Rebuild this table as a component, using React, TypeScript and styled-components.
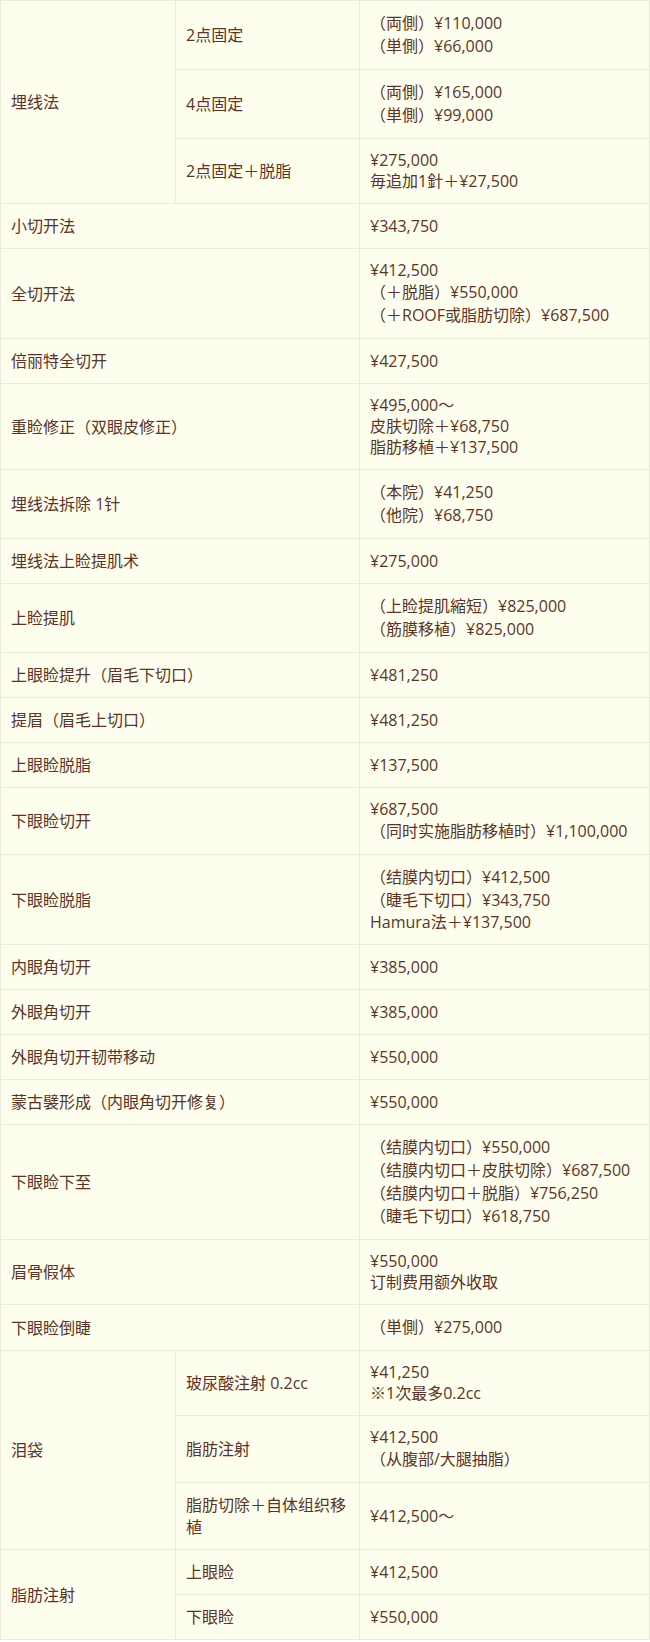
import { Fragment } from "react";
import styled, { createGlobalStyle } from "styled-components";

type Sub = {
  label: string;
  lines: string[];
};

type Item = {
  name: string;
  lines?: string[];
  subs?: Sub[];
};

const items: Item[] = [
  {
    name: "埋线法",
    subs: [
      { label: "2点固定", lines: ["（両側）¥110,000", "（単側）¥66,000"] },
      { label: "4点固定", lines: ["（両側）¥165,000", "（単側）¥99,000"] },
      { label: "2点固定＋脱脂", lines: ["¥275,000", "毎追加1針＋¥27,500"] },
    ],
  },
  { name: "小切开法", lines: ["¥343,750"] },
  {
    name: "全切开法",
    lines: ["¥412,500", "（＋脱脂）¥550,000", "（＋ROOF或脂肪切除）¥687,500"],
  },
  { name: "倍丽特全切开", lines: ["¥427,500"] },
  {
    name: "重睑修正（双眼皮修正）",
    lines: ["¥495,000～", "皮肤切除＋¥68,750", "脂肪移植＋¥137,500"],
  },
  { name: "埋线法拆除 1针", lines: ["（本院）¥41,250", "（他院）¥68,750"] },
  { name: "埋线法上睑提肌术", lines: ["¥275,000"] },
  {
    name: "上睑提肌",
    lines: ["（上睑提肌縮短）¥825,000", "（筋膜移植）¥825,000"],
  },
  { name: "上眼睑提升（眉毛下切口）", lines: ["¥481,250"] },
  { name: "提眉（眉毛上切口）", lines: ["¥481,250"] },
  { name: "上眼睑脱脂", lines: ["¥137,500"] },
  {
    name: "下眼睑切开",
    lines: ["¥687,500", "（同时实施脂肪移植时）¥1,100,000"],
  },
  {
    name: "下眼睑脱脂",
    lines: [
      "（结膜内切口）¥412,500",
      "（睫毛下切口）¥343,750",
      "Hamura法＋¥137,500",
    ],
  },
  { name: "内眼角切开", lines: ["¥385,000"] },
  { name: "外眼角切开", lines: ["¥385,000"] },
  { name: "外眼角切开韧带移动", lines: ["¥550,000"] },
  { name: "蒙古襞形成（内眼角切开修复）", lines: ["¥550,000"] },
  {
    name: "下眼睑下至",
    lines: [
      "（结膜内切口）¥550,000",
      "（结膜内切口＋皮肤切除）¥687,500",
      "（结膜内切口＋脱脂）¥756,250",
      "（睫毛下切口）¥618,750",
    ],
  },
  { name: "眉骨假体", lines: ["¥550,000", "订制费用额外收取"] },
  { name: "下眼睑倒睫", lines: ["（単側）¥275,000"] },
  {
    name: "泪袋",
    subs: [
      { label: "玻尿酸注射 0.2cc", lines: ["¥41,250", "※1次最多0.2cc"] },
      { label: "脂肪注射", lines: ["¥412,500", "（从腹部/大腿抽脂）"] },
      { label: "脂肪切除＋自体组织移植", lines: ["¥412,500～"] },
    ],
  },
  {
    name: "脂肪注射",
    subs: [
      { label: "上眼睑", lines: ["¥412,500"] },
      { label: "下眼睑", lines: ["¥550,000"] },
    ],
  },
];

const Price = ({ lines }: { lines: string[] }) => (
  <PriceCell>
    {lines.map((line) => (
      <Line key={line} $paren={line.startsWith("（")}>
        {line}
      </Line>
    ))}
  </PriceCell>
);

const App = () => {
  return (
    <>
      <GlobalStyle />
      <Table>
        <colgroup>
          <col style={{ width: 175 }} />
          <col style={{ width: 184 }} />
          <col />
        </colgroup>
        <tbody>
          {items.map((item) =>
            item.subs ? (
              <Fragment key={item.name}>
                {item.subs.map((sub, i) => (
                  <tr key={sub.label}>
                    {i === 0 && (
                      <NameCell rowSpan={item.subs!.length}>{item.name}</NameCell>
                    )}
                    <SubCell>{sub.label}</SubCell>
                    <Price lines={sub.lines} />
                  </tr>
                ))}
              </Fragment>
            ) : (
              <tr key={item.name}>
                <NameCell colSpan={2}>{item.name}</NameCell>
                <Price lines={item.lines!} />
              </tr>
            )
          )}
        </tbody>
      </Table>
    </>
  );
};

export default App;

const GlobalStyle = createGlobalStyle`
  body {
    margin: 0;
    background: #fff;
    font-family: "Open Sans", "Noto Sans CJK JP", "Noto Sans CJK SC", sans-serif;
  }
`;

const Table = styled.table`
  width: 650px;
  table-layout: fixed;
  border-collapse: collapse;
  background: #fefeee;
  color: #5a3527;
  font-size: 16px;

  td {
    border: 1px solid #ebebdc;
    padding: 11px 10px;
    line-height: 22px;
    vertical-align: middle;
    text-align: left;
  }
`;

const NameCell = styled.td``;

const SubCell = styled.td``;

const PriceCell = styled.td`
  white-space: nowrap;
`;

const Line = styled.div<{ $paren?: boolean }>`
  line-height: ${(props) => (props.$paren ? "23px" : "21px")};
`;
